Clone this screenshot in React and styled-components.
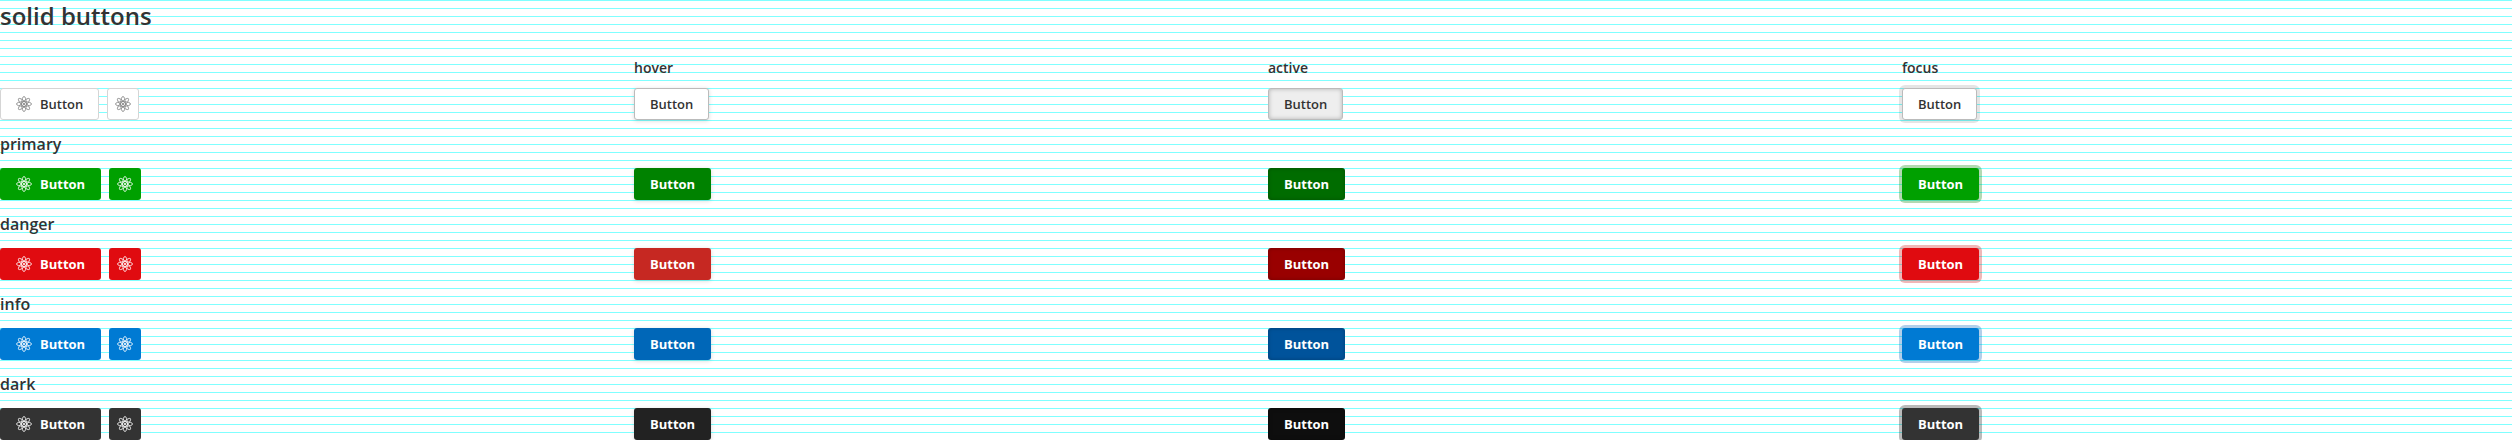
import React from "react";
import styled, { createGlobalStyle, css } from "styled-components";

const GlobalStyle = createGlobalStyle`
  *, *::before, *::after { box-sizing: border-box; }
  body {
    margin: 0;
    height: 440px;
    overflow: hidden;
    color: #333;
    font-family: "Open Sans", "Noto Sans", sans-serif;
    background: repeating-linear-gradient(to bottom, #80ffff 0, #80ffff 1px, #fff 1px, #fff 8px);
  }
`;

const Title = styled.h1`
  margin: 0;
  height: 56px;
  font-size: 24px;
  font-weight: 600;
  line-height: 32px;
`;

const Row = styled.div`
  display: grid;
  grid-template-columns: repeat(4, 1fr);
  column-gap: 24px;
`;

const StateLabel = styled.h3`
  margin: 0;
  height: 32px;
  font-size: 14px;
  font-weight: 600;
  line-height: 24px;
`;

const GroupLabel = styled.h2`
  margin: 0;
  padding: 12px 0;
  height: 48px;
  font-size: 16px;
  font-weight: 600;
  line-height: 24px;
`;

const Cell = styled.div`
  display: flex;
  gap: 8px;
  height: 32px;
`;

const palette = {
  plain: { base: "#fff", hover: "#fff", active: "#eee", ring: "rgba(0, 0, 0, 0.1)" },
  primary: { base: "#00a000", hover: "#008200", active: "#006c00", ring: "rgba(0, 128, 0, 0.3)" },
  danger: { base: "#e00b10", hover: "#c62822", active: "#990000", ring: "rgba(204, 16, 16, 0.3)" },
  info: { base: "#007ad3", hover: "#0067b8", active: "#00539b", ring: "rgba(0, 96, 185, 0.3)" },
  dark: { base: "#333", hover: "#222", active: "#0e0e0e", ring: "rgba(26, 26, 26, 0.3)" },
};

const plainLook = css`
  color: #333;
  font-weight: 600;
  border: 1px solid ${(p) => (p.$state === "base" ? "#d5d5d5" : "#bbb")};
  padding: 0 ${(p) => (p.$square ? "7px" : "15px")};
`;

const solidLook = css`
  color: #fff;
  font-weight: 700;
  border: 0;
  padding: 0 ${(p) => (p.$square ? "8px" : "16px")};
`;

const shadows = {
  base: () => "none",
  hover: () => "0 1px 4px rgba(0, 0, 0, 0.15)",
  active: () => "inset 0 0 4px rgba(0, 0, 0, 0.25)",
  focus: (c) => `0 0 0 3px ${c.ring}`,
};

const Button = styled.button`
  display: inline-flex;
  align-items: center;
  gap: 8px;
  height: 32px;
  border-radius: 3px;
  font-family: inherit;
  font-size: 13px;
  line-height: 24px;
  background: ${(p) => palette[p.$kind][p.$state] || palette[p.$kind].base};
  ${(p) => (p.$kind === "plain" ? plainLook : solidLook)}
  box-shadow: ${(p) => shadows[p.$state](palette[p.$kind])};
`;

const Icon = styled.svg`
  width: 16px;
  height: 16px;
  flex: none;
  color: ${(p) => (p.$muted ? "#808080" : "#fff")};
`;

function AtomIcon({ muted }) {
  return (
    <Icon $muted={muted} viewBox="0 0 16 16" fill="none" stroke="currentColor" strokeWidth="0.8">
      {[0, 45, 90, 135].map((a) => (
        <ellipse key={a} cx="8" cy="8" rx="7.6" ry="2.3" transform={`rotate(${a} 8 8)`} />
      ))}
      <circle cx="8" cy="8" r="1.1" fill="currentColor" stroke="none" />
    </Icon>
  );
}

function ButtonRow({ kind }) {
  const muted = kind === "plain";
  return (
    <Row>
      <Cell>
        <Button $kind={kind} $state="base">
          <AtomIcon muted={muted} />
          Button
        </Button>
        <Button $kind={kind} $state="base" $square aria-label={kind}>
          <AtomIcon muted={muted} />
        </Button>
      </Cell>
      {["hover", "active", "focus"].map((s) => (
        <Cell key={s}>
          <Button $kind={kind} $state={s}>Button</Button>
        </Cell>
      ))}
    </Row>
  );
}

export default function App() {
  return (
    <>
      <GlobalStyle />
      <Title>solid buttons</Title>
      <Row>
        <span />
        <StateLabel>hover</StateLabel>
        <StateLabel>active</StateLabel>
        <StateLabel>focus</StateLabel>
      </Row>
      <ButtonRow kind="plain" />
      {["primary", "danger", "info", "dark"].map((kind) => (
        <React.Fragment key={kind}>
          <GroupLabel>{kind}</GroupLabel>
          <ButtonRow kind={kind} />
        </React.Fragment>
      ))}
    </>
  );
}
